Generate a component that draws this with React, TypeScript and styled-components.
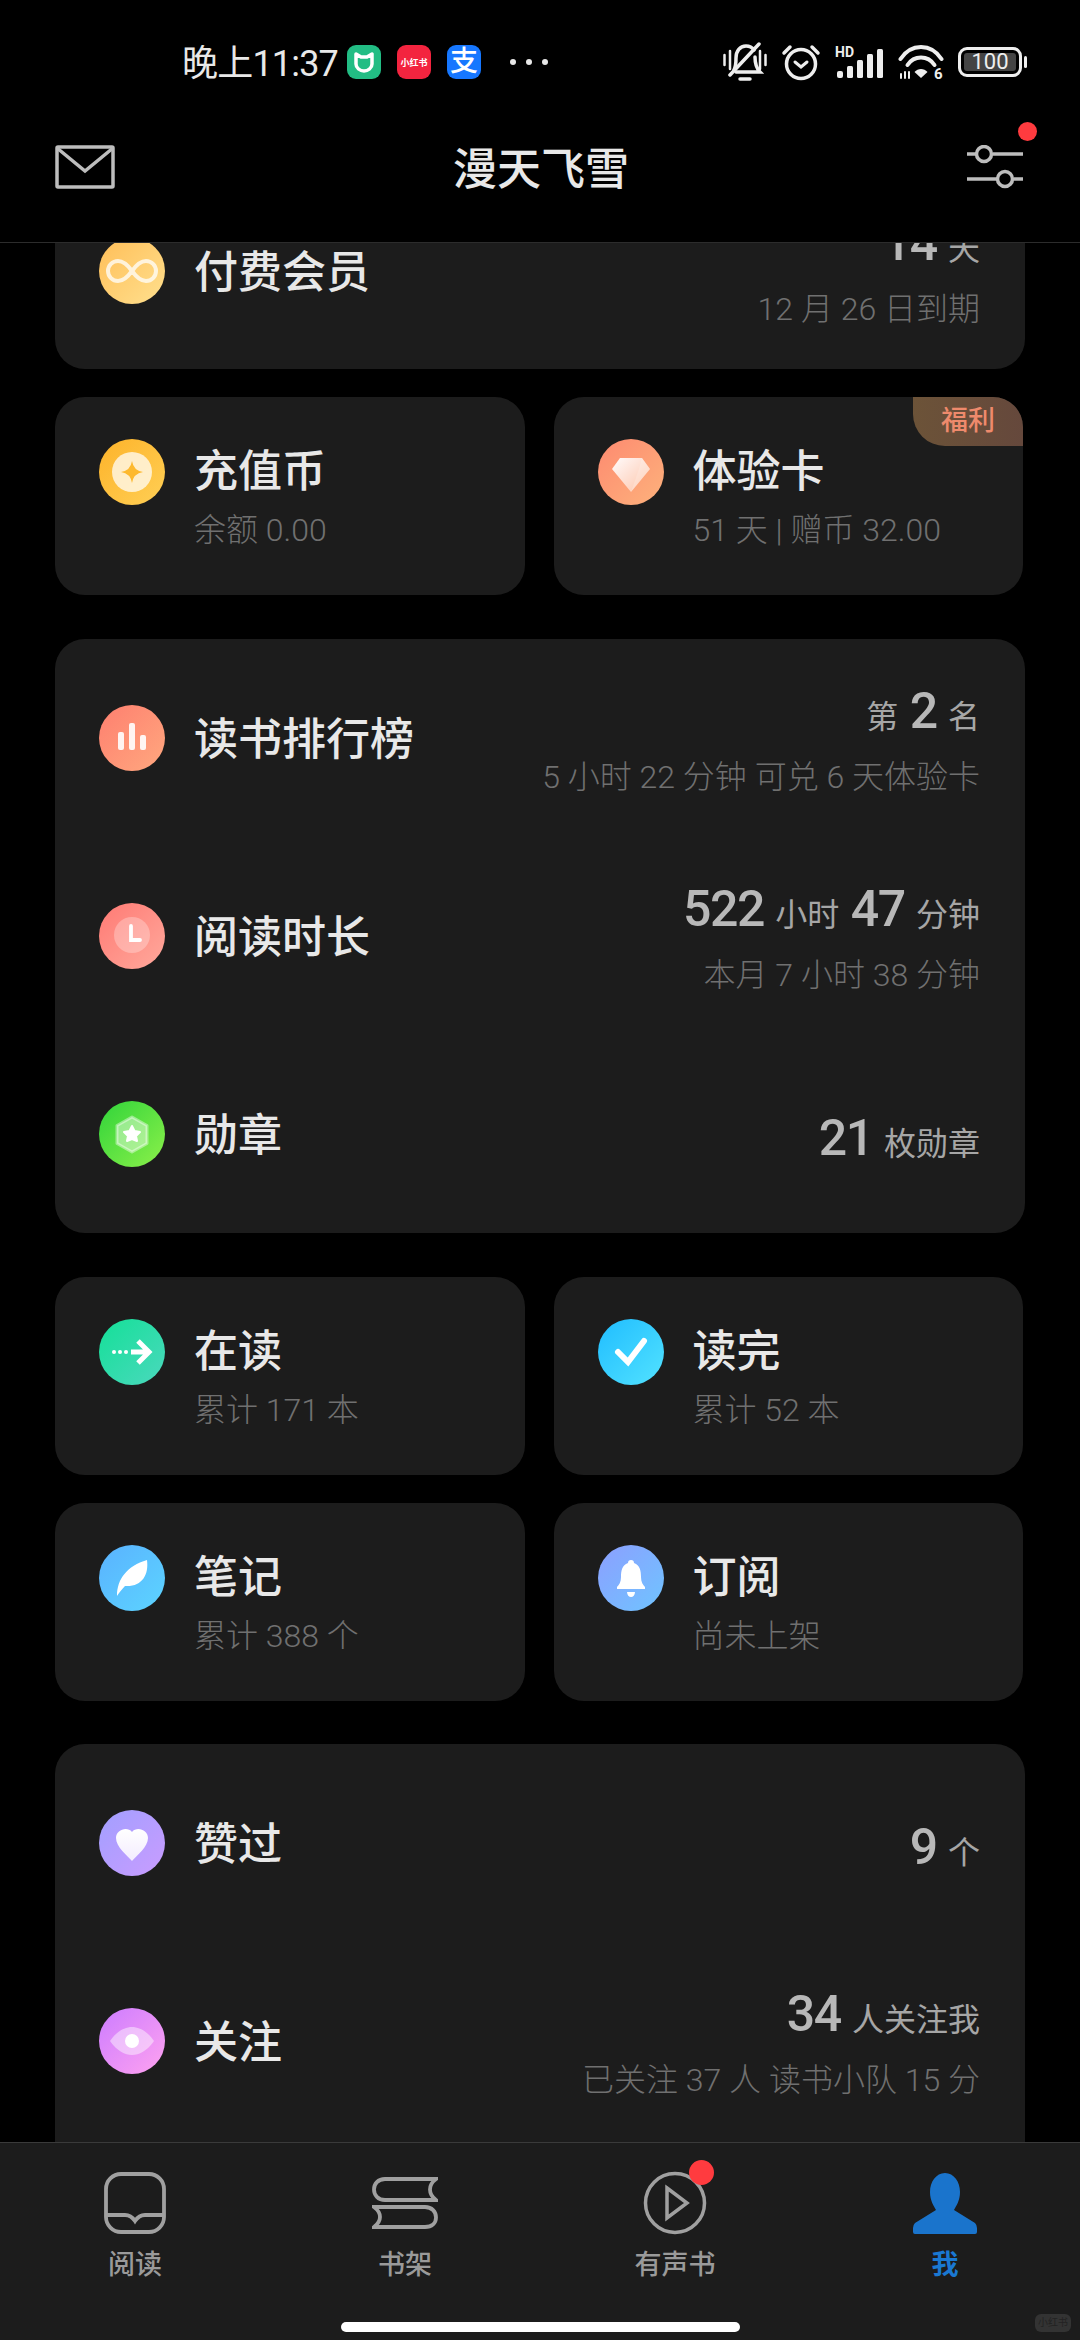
import styled, {createGlobalStyle} from 'styled-components';
import type {ReactNode} from 'react';

const GlobalStyle = createGlobalStyle`
  html, body {
    margin: 0;
    padding: 0;
    background: #000;
  }

  body {
    font-family: Roboto, "Noto Sans CJK SC", sans-serif;
  }
`;

const CoinIcon = () => (
    <svg viewBox="0 0 66 66" width="66" height="66">
        <circle cx="33" cy="33" r="20" fill="#fff" opacity=".72"/>
        <path d="M33 22Q34.5 31.5 44 33 34.5 34.5 33 44 31.5 34.5 22 33 31.5 31.5 33 22Z" fill="#fdb92f"/>
    </svg>
);

const InfinityIcon = () => (
    <svg viewBox="0 0 66 66" width="66" height="66">
        <path d="M33 33c-5-7-9-10-14-10a10 10 0 0 0 0 20c5 0 9-3 14-10s9-10 14-10a10 10 0 0 1 0 20c-5 0-9-3-14-10z"
              fill="none" stroke="#fff" strokeOpacity=".75" strokeWidth="4"/>
    </svg>
);

const DiamondIcon = () => (
    <svg viewBox="0 0 66 66" width="66" height="66">
        <defs>
            <linearGradient id="gem" x1="0" y1="0" x2="1" y2="1">
                <stop offset="0" stopColor="#fff" stopOpacity=".98"/>
                <stop offset="1" stopColor="#fff" stopOpacity=".35"/>
            </linearGradient>
        </defs>
        <path d="M22 19H44L52 30 33 53 14 30Z" fill="url(#gem)"/>
        <path d="M44 19 52 30 33 53 41 30Z" fill="#fff" opacity=".18"/>
    </svg>
);

const BarsIcon = () => (
    <svg viewBox="0 0 66 66" width="66" height="66" fill="#fff" fillOpacity=".9">
        <rect x="19" y="27" width="6" height="18" rx="2"/>
        <rect x="30" y="18" width="6" height="27" rx="2"/>
        <rect x="41" y="30" width="6" height="15" rx="2"/>
    </svg>
);

const ClockIcon = () => (
    <svg viewBox="0 0 66 66" width="66" height="66">
        <circle cx="33" cy="32" r="18" fill="#fff" opacity=".28"/>
        <path d="M32 23V37H41" fill="none" stroke="#fff" strokeWidth="3.8" strokeLinecap="round"/>
    </svg>
);

const MedalIcon = () => (
    <svg viewBox="0 0 66 66" width="66" height="66">
        <path d="M33 16 48 24.5V42.5L33 51 18 42.5V24.5Z" fill="#fff" fillOpacity=".42" stroke="#fff"
              strokeOpacity=".42" strokeWidth="3" strokeLinejoin="round"/>
        <path d="M33 25 35.5 30 41 31 37 35 38 40 33 38 28 40 29 35 25 31 30.5 30Z" fill="#fff" stroke="#fff"
              strokeWidth="2" strokeLinejoin="round"/>
    </svg>
);

const ArrowIcon = () => (
    <svg viewBox="0 0 66 66" width="66" height="66">
        <g fill="#fff">
            <circle cx="15" cy="33" r="2"/>
            <circle cx="21" cy="33" r="2"/>
            <circle cx="27" cy="33" r="2"/>
        </g>
        <path d="M32 33H48M39 22 50 33 39 44" fill="none" stroke="#fff" strokeWidth="5"/>
    </svg>
);

const CheckIcon = () => (
    <svg viewBox="0 0 66 66" width="66" height="66">
        <path d="M20 33 30 43 46 22" fill="none" stroke="#fff" strokeWidth="6" strokeLinecap="round"/>
    </svg>
);

const FeatherIcon = () => (
    <svg viewBox="0 0 66 66" width="66" height="66">
        <path d="M18 51C18 34 28 21 48 15 50 30 43 42 26 41 23 44 20 48 18 51Z" fill="#fff"/>
    </svg>
);

const BellIcon = () => (
    <svg viewBox="0 0 66 66" width="66" height="66" fill="#fff">
        <path d="M33 15c2 0 3 1 3 3 6 2 7 8 7 14 0 5 2 8 4 10v2H19v-2c2-2 4-5 4-10 0-6 1-12 7-14 0-2 1-3 3-3z"/>
        <path d="M29 47h8c0 3-2 5-4 5s-4-2-4-5z"/>
    </svg>
);

const HeartIcon = () => (
    <svg viewBox="0 0 66 66" width="66" height="66">
        <defs>
            <linearGradient id="heart" x1="0" y1="0" x2="0" y2="1">
                <stop offset="0" stopColor="#fff"/>
                <stop offset="1" stopColor="#f3ecff"/>
            </linearGradient>
        </defs>
        <path d="M33 51C28 45 17 37 17 28 17 20 28 16 33 22 38 16 49 20 49 28 49 37 38 45 33 51Z" fill="url(#heart)"/>
    </svg>
);

const EyeIcon = () => (
    <svg viewBox="0 0 66 66" width="66" height="66">
        <path d="M11 33C18 23 26 19 33 19 40 19 48 23 55 33 48 43 40 47 33 47 26 47 18 43 11 33Z" fill="#fff"
              opacity=".45"/>
        <circle cx="33" cy="33" r="7" fill="#fff"/>
    </svg>
);

const MailIcon = () => (
    <svg viewBox="0 0 60 44" width="60" height="44" fill="none" stroke="#bdbdbd" strokeWidth="3.5">
        <rect x="2" y="2" width="56" height="40" rx="1"/>
        <path d="M2 3 30 26 58 3"/>
    </svg>
);

const SlidersIcon = () => (
    <svg viewBox="0 0 56 44" width="56" height="44" fill="none" stroke="#bdbdbd" strokeWidth="3.5">
        <path d="M0 9H9M26 9H56M0 34H30M47 34H56"/>
        <circle cx="17" cy="9" r="7.5"/>
        <circle cx="38" cy="34" r="7.5"/>
    </svg>
);

const MuteIcon = () => (
    <svg viewBox="0 0 44 40" width="44" height="40" fill="none" stroke="#eee" strokeWidth="3.5" strokeLinecap="round">
        <path d="M1.5 13V23M7 9V27M37 9V27M42.5 13V23" strokeWidth="2.5"/>
        <path d="M11 28C13 24 13 20 13 16 13 9 17 4 23 4 26 4 29 5 31 8M32 15C32 20 33 26 37 30H13"/>
        <path d="M7 33 36 2"/>
        <path d="M17 37H27"/>
    </svg>
);

const AlarmIcon = () => (
    <svg viewBox="0 0 40 38" width="40" height="38" fill="none" stroke="#eee" strokeWidth="3.5" strokeLinecap="round">
        <circle cx="20" cy="21" r="14.5"/>
        <path d="M14 19 20 24 26 19" strokeWidth="3"/>
        <path d="M3 10 9 4M37 10 31 4"/>
    </svg>
);

const SignalIcon = () => (
    <svg viewBox="0 0 49 32" width="49" height="32" fill="#eee">
        <text x="0" y="11" fontSize="14" fontWeight="700" fontFamily="Roboto, sans-serif">HD</text>
        <rect x="2" y="25" width="6" height="7" rx="2"/>
        <rect x="12" y="20" width="6" height="12" rx="1.5"/>
        <rect x="22" y="14" width="6" height="18" rx="1.5"/>
        <rect x="32" y="8" width="6" height="24" rx="1.5"/>
        <rect x="42" y="3" width="6" height="29" rx="1.5"/>
    </svg>
);

const WifiIcon = () => (
    <svg viewBox="0 0 46 36" width="46" height="36" fill="none" stroke="#eee" strokeWidth="4" strokeLinecap="round">
        <path d="M2.5 15C13 -1 33 -1 43.5 15"/>
        <path d="M9.5 21C16 11 30 11 36.5 21"/>
        <path d="M23 34 16.5 28C20 24 26 24 29.5 28Z" fill="#eee" stroke="none"/>
        <path d="M3 30V34M7 28V34M11 34V28" strokeWidth="2"/>
        <text x="36" y="35" fontSize="15" fontWeight="700" fill="#eee" stroke="none" fontFamily="Roboto, sans-serif">6</text>
    </svg>
);

const MiIcon = () => (
    <svg viewBox="0 0 34 34" width="34" height="34" fill="none" stroke="#fff" strokeWidth="3.5" strokeLinejoin="round">
        <path d="M9 9 14 12H20L25 9V19C25 23 21 26 17 26 13 26 9 23 9 19Z"/>
    </svg>
);

const ReadTabIcon = () => (
    <svg viewBox="0 0 62 62" width="62" height="62" fill="none" stroke="#a0a0a0" strokeWidth="3.8">
        <rect x="2" y="2" width="58" height="58" rx="15"/>
        <path d="M2 43H21Q27 43 31 49 35 43 41 43H60"/>
    </svg>
);

const ShelfTabIcon = () => (
    <svg viewBox="0 0 66 52" width="66" height="52" fill="none" stroke="#a0a0a0" strokeWidth="3.8">
        <path d="M64 2H13C6 2 2 7 2 12.5 2 18 6 23 13 23H64C60 20 58 16 58 12.5 58 9 60 5 64 2Z"/>
        <path d="M2 30H53C60 30 64 35 64 40.5 64 46 60 50 53 50H2C6 47 8 44 8 40 8 36 6 33 2 30Z"/>
    </svg>
);

const AudioTabIcon = () => (
    <svg viewBox="0 0 64 64" width="64" height="64" fill="none" stroke="#a0a0a0" strokeWidth="3.5">
        <circle cx="32" cy="32" r="29.5"/>
        <path d="M24 17 44 32 24 47Z"/>
    </svg>
);

const MeTabIcon = () => (
    <svg viewBox="0 0 64 61" width="64" height="61">
        <path
            d="M32 0C41 0 47 9 47 19 47 28 43 33 41 37L62 50Q64 52 64 55V59Q64 61 62 61H2Q0 61 0 59V55Q0 52 2 50L23 37C21 33 17 28 17 19 17 9 23 0 32 0Z"
            fill="#1a74cc"/>
    </svg>
);

interface StatInfo {
    icon: ReactNode;
    from: string;
    to: string;
    title: string;
    sub: string;
    perk?: boolean;
}

const topCards: StatInfo[] = [
    {icon: <CoinIcon/>, from: '#fdb32a', to: '#ffcf55', title: '充值币', sub: '余额 0.00'},
    {icon: <DiamondIcon/>, from: '#fd8a70', to: '#fdb27c', title: '体验卡', sub: '51 天 | 赠币 32.00', perk: true},
];

const readingCards: StatInfo[] = [
    {icon: <ArrowIcon/>, from: '#14e098', to: '#4bd8bd', title: '在读', sub: '累计 171 本'},
    {icon: <CheckIcon/>, from: '#20bdff', to: '#52e2ff', title: '读完', sub: '累计 52 本'},
    {icon: <FeatherIcon/>, from: '#5ab2ff', to: '#5cd4ff', title: '笔记', sub: '累计 388 个'},
    {icon: <BellIcon/>, from: '#8c9fff', to: '#6fc4ff', title: '订阅', sub: '尚未上架'},
];

export default function App(): JSX.Element {
    return (
        <Page>
            <GlobalStyle/>
            <Header>
                <StatusBar>
                    <StatusLeft>
                        <Clock>晚上11:37</Clock>
                        <NotifyIcons>
                            <AppBadge $color="#22bd84"><MiIcon/></AppBadge>
                            <AppBadge $color="#f3243f"><TinyLabel>小红书</TinyLabel></AppBadge>
                            <AppBadge $color="#1677ff"><AlipayLabel>支</AlipayLabel></AppBadge>
                        </NotifyIcons>
                        <MoreDots><i/><i/><i/></MoreDots>
                    </StatusLeft>
                    <StatusRight>
                        <MuteIcon/>
                        <AlarmIcon/>
                        <SignalIcon/>
                        <WifiIcon/>
                        <Battery>
                            <BatteryBody><BatteryLevel>100</BatteryLevel></BatteryBody>
                            <BatteryNub/>
                        </Battery>
                    </StatusRight>
                </StatusBar>
                <NavBar>
                    <MailIcon/>
                    <NavTitle>漫天飞雪</NavTitle>
                    <SettingsButton>
                        <SlidersIcon/>
                        <SettingsDot/>
                    </SettingsButton>
                </NavBar>
            </Header>

            <Scroller>
                <ScrollContent>
                    <CardGroup>
                        <ListCard>
                            <MemberRow>
                                <IconCircle $from="#ffbe58" $to="#ffe08e"><InfinityIcon/></IconCircle>
                                <RowTitle>付费会员</RowTitle>
                                <RowValues>
                                    <ValueLine><Num>14</Num> <Unit>天</Unit></ValueLine>
                                    <SubLine>12 月 26 日到期</SubLine>
                                </RowValues>
                            </MemberRow>
                        </ListCard>
                        <CardGrid>
                            {topCards.map((card) => <StatCardComponent key={card.title} card={card}/>)}
                        </CardGrid>
                    </CardGroup>

                    <ListCard>
                        <Row>
                            <IconCircle $from="#fe7f6f" $to="#ffa87f"><BarsIcon/></IconCircle>
                            <RowTitle>读书排行榜</RowTitle>
                            <RowValues>
                                <ValueLine><Unit>第</Unit> <Num>2</Num> <Unit>名</Unit></ValueLine>
                                <SubLine>5 小时 22 分钟 可兑 6 天体验卡</SubLine>
                            </RowValues>
                        </Row>
                        <Row>
                            <IconCircle $from="#ff7a74" $to="#ffa99c"><ClockIcon/></IconCircle>
                            <RowTitle>阅读时长</RowTitle>
                            <RowValues>
                                <ValueLine>
                                    <Num>522</Num> <Unit>小时</Unit> <Num>47</Num> <Unit>分钟</Unit>
                                </ValueLine>
                                <SubLine>本月 7 小时 38 分钟</SubLine>
                            </RowValues>
                        </Row>
                        <Row>
                            <IconCircle $from="#30d43a" $to="#8cf04a"><MedalIcon/></IconCircle>
                            <RowTitle>勋章</RowTitle>
                            <RowValues>
                                <ValueLine><Num>21</Num> <Unit>枚勋章</Unit></ValueLine>
                            </RowValues>
                        </Row>
                    </ListCard>

                    <CardGrid>
                        {readingCards.map((card) => <StatCardComponent key={card.title} card={card}/>)}
                    </CardGrid>

                    <SocialCard>
                        <Row>
                            <IconCircle $from="#a29fff" $to="#c99cff"><HeartIcon/></IconCircle>
                            <RowTitle>赞过</RowTitle>
                            <RowValues>
                                <ValueLine><Num>9</Num> <Unit>个</Unit></ValueLine>
                            </RowValues>
                        </Row>
                        <Row>
                            <IconCircle $from="#cc7cff" $to="#ffa2f0"><EyeIcon/></IconCircle>
                            <RowTitle>关注</RowTitle>
                            <RowValues>
                                <ValueLine><Num>34</Num> <Unit>人关注我</Unit></ValueLine>
                                <SubLine>已关注 37 人 读书小队 15 分</SubLine>
                            </RowValues>
                        </Row>
                    </SocialCard>
                </ScrollContent>
            </Scroller>

            <TabBar>
                <Tabs>
                    <Tab>
                        <TabIcon><ReadTabIcon/></TabIcon>
                        <TabLabel>阅读</TabLabel>
                    </Tab>
                    <Tab>
                        <TabIcon><ShelfTabIcon/></TabIcon>
                        <TabLabel>书架</TabLabel>
                    </Tab>
                    <Tab>
                        <TabIcon>
                            <AudioTabIcon/>
                            <TabDot/>
                        </TabIcon>
                        <TabLabel>有声书</TabLabel>
                    </Tab>
                    <Tab>
                        <TabIcon><MeTabIcon/></TabIcon>
                        <TabLabel $active>我</TabLabel>
                    </Tab>
                </Tabs>
                <HomeIndicator/>
                <Watermark>小红书</Watermark>
            </TabBar>
        </Page>
    );
}

function StatCardComponent({card}: { card: StatInfo }): JSX.Element {
    return (
        <StatCard>
            <IconCircle $from={card.from} $to={card.to}>{card.icon}</IconCircle>
            <StatText>
                <StatTitle>{card.title}</StatTitle>
                <StatSub>{card.sub}</StatSub>
            </StatText>
            {card.perk && <PerkTag>福利</PerkTag>}
        </StatCard>
    );
}

const Page = styled.div`
  width: 1080px;
  height: 2340px;
  display: flex;
  flex-direction: column;
  overflow: hidden;
  background: #000;
`;

const Header = styled.header`
  position: relative;
  z-index: 2;
  flex: none;
  height: 243px;
  box-sizing: border-box;
  border-bottom: 1px solid #2c2c2c;
  background: #000;
`;

const StatusBar = styled.div`
  height: 92px;
  box-sizing: border-box;
  padding: 32px 53px 0 182px;
  display: flex;
  justify-content: space-between;
  align-items: center;
`;

const StatusLeft = styled.div`
  display: flex;
  align-items: center;
`;

const Clock = styled.span`
  width: 165px;
  padding-bottom: 5px;
  font-size: 36px;
  letter-spacing: -0.8px;
  color: #e8e8e8;
  white-space: nowrap;
`;

const NotifyIcons = styled.div`
  display: flex;
  gap: 16px;
`;

const AppBadge = styled.div<{ $color: string }>`
  width: 34px;
  height: 34px;
  border-radius: 9px;
  background: ${(p) => p.$color};
  display: flex;
  align-items: center;
  justify-content: center;
  overflow: hidden;
`;

const TinyLabel = styled.span`
  font-size: 9px;
  font-weight: 700;
  color: #fff;
  white-space: nowrap;
`;

const AlipayLabel = styled.span`
  font-size: 28px;
  line-height: 34px;
  font-weight: 500;
  color: #fff;
`;

const MoreDots = styled.div`
  margin-left: 29px;
  display: flex;
  gap: 10px;

  i {
    width: 6px;
    height: 6px;
    border-radius: 50%;
    background: #e8e8e8;
  }
`;

const StatusRight = styled.div`
  display: flex;
  align-items: center;
  gap: 14px;
`;

const Battery = styled.div`
  display: flex;
  align-items: center;
  gap: 2px;
`;

const BatteryBody = styled.div`
  width: 64px;
  height: 30px;
  box-sizing: border-box;
  border: 3px solid #eee;
  border-radius: 9px;
  padding: 3px;
  display: flex;
`;

const BatteryLevel = styled.div`
  flex: 1;
  border-radius: 3px;
  background: #444;
  color: #eee;
  font-size: 22px;
  line-height: 18px;
  text-align: center;
`;

const BatteryNub = styled.div`
  width: 3px;
  height: 12px;
  border-radius: 2px;
  background: #eee;
`;

const NavBar = styled.div`
  height: 150px;
  box-sizing: border-box;
  padding: 0 57px 0 55px;
  display: flex;
  align-items: center;
  justify-content: space-between;
`;

const NavTitle = styled.h1`
  margin: 0;
  padding-bottom: 3px;
  font-size: 44px;
  font-weight: 500;
  color: #e8e8e8;
`;

const SettingsButton = styled.div`
  position: relative;
  display: flex;
`;

const SettingsDot = styled.span`
  position: absolute;
  top: -23px;
  right: -14px;
  width: 19px;
  height: 19px;
  border-radius: 50%;
  background: #ff3b3f;
`;

const Scroller = styled.main`
  flex: 1;
  min-height: 0;
  overflow: hidden;
`;

const ScrollContent = styled.div`
  margin-top: -71px;
  padding: 0 55px;
  display: flex;
  flex-direction: column;
  gap: 44px;
`;

const CardGroup = styled.div`
  display: flex;
  flex-direction: column;
  gap: 28px;
`;

const ListCard = styled.section`
  border-radius: 30px;
  background: #1c1c1c;
`;

const SocialCard = styled(ListCard)`
  margin-top: -1px;
  padding-bottom: 60px;
`;

const Row = styled.div`
  height: 198px;
  box-sizing: border-box;
  padding: 0 45px 0 44px;
  display: flex;
  align-items: center;
  gap: 29px;
`;

const MemberRow = styled(Row)`
  height: 197px;
`;

const IconCircle = styled.div<{ $from: string; $to: string }>`
  flex: none;
  width: 66px;
  height: 66px;
  border-radius: 50%;
  background: linear-gradient(135deg, ${(p) => p.$from}, ${(p) => p.$to});
  display: flex;
`;

const RowTitle = styled.div`
  flex: 1;
  padding-bottom: 4px;
  font-size: 44px;
  font-weight: 500;
  color: #e8e8e8;
  white-space: nowrap;
`;

const RowValues = styled.div`
  padding-top: 8px;
  display: flex;
  flex-direction: column;
  align-items: flex-end;
  gap: 17px;
`;

const ValueLine = styled.div`
  height: 52px;
  line-height: 52px;
  color: #a6a6a6;
  font-size: 46px;
  white-space: nowrap;
`;

const Num = styled.span`
  font-size: 50px;
  font-weight: 500;
  letter-spacing: -1.5px;
  color: #b8b8b8;
`;

const Unit = styled.span`
  font-size: 32px;
  color: #a6a6a6;
`;

const SubLine = styled.div`
  height: 46px;
  line-height: 46px;
  font-size: 32px;
  font-weight: 300;
  color: #707070;
  white-space: nowrap;
`;

const CardGrid = styled.div`
  display: grid;
  grid-template-columns: 469.5px 469.5px;
  gap: 28px 29px;
`;

const StatCard = styled.article`
  position: relative;
  height: 198px;
  box-sizing: border-box;
  padding: 42px 44px 0;
  border-radius: 30px;
  background: #1c1c1c;
  overflow: hidden;
  display: flex;
  gap: 29px;
`;

const StatText = styled.div`
  display: flex;
  flex-direction: column;
`;

const StatTitle = styled.div`
  height: 66px;
  line-height: 66px;
  font-size: 44px;
  font-weight: 500;
  color: #e8e8e8;
`;

const StatSub = styled.div`
  height: 50px;
  line-height: 50px;
  font-size: 32px;
  font-weight: 300;
  color: #707070;
  white-space: nowrap;
`;

const PerkTag = styled.span`
  position: absolute;
  top: 0;
  right: 0;
  width: 110px;
  height: 49px;
  border-bottom-left-radius: 32px;
  background: linear-gradient(90deg, #6c5338, #65483c);
  color: #ee8a6c;
  font-size: 27px;
  font-weight: 500;
  line-height: 49px;
  text-align: center;
`;

const TabBar = styled.nav`
  position: relative;
  z-index: 2;
  flex: none;
  height: 198px;
  box-sizing: border-box;
  border-top: 1px solid #3a3a3a;
  background: #1c1c1c;
`;

const Tabs = styled.div`
  display: grid;
  grid-template-columns: repeat(4, 270px);
  padding-top: 29px;
`;

const Tab = styled.div`
  display: flex;
  flex-direction: column;
  align-items: center;
`;

const TabIcon = styled.div`
  position: relative;
  height: 62px;
  display: flex;
  align-items: center;
`;

const TabDot = styled.span`
  position: absolute;
  top: -12px;
  right: -7px;
  width: 25px;
  height: 25px;
  border-radius: 50%;
  background: #ff3b3f;
`;

const TabLabel = styled.span<{ $active?: boolean }>`
  margin-top: 11px;
  font-size: 27px;
  line-height: 40px;
  font-weight: ${(p) => (p.$active ? 700 : 500)};
  color: ${(p) => (p.$active ? '#1a78d2' : '#9a9a9a')};
`;

const HomeIndicator = styled.div`
  width: 399px;
  height: 10px;
  margin: 37px auto 0;
  border-radius: 5px;
  background: #fff;
`;

const Watermark = styled.span`
  position: absolute;
  right: 9px;
  bottom: 8px;
  width: 36px;
  height: 18px;
  border-radius: 6px;
  background: #333;
  color: #222;
  font-size: 10px;
  line-height: 18px;
  text-align: center;
  white-space: nowrap;
  overflow: hidden;
`;
